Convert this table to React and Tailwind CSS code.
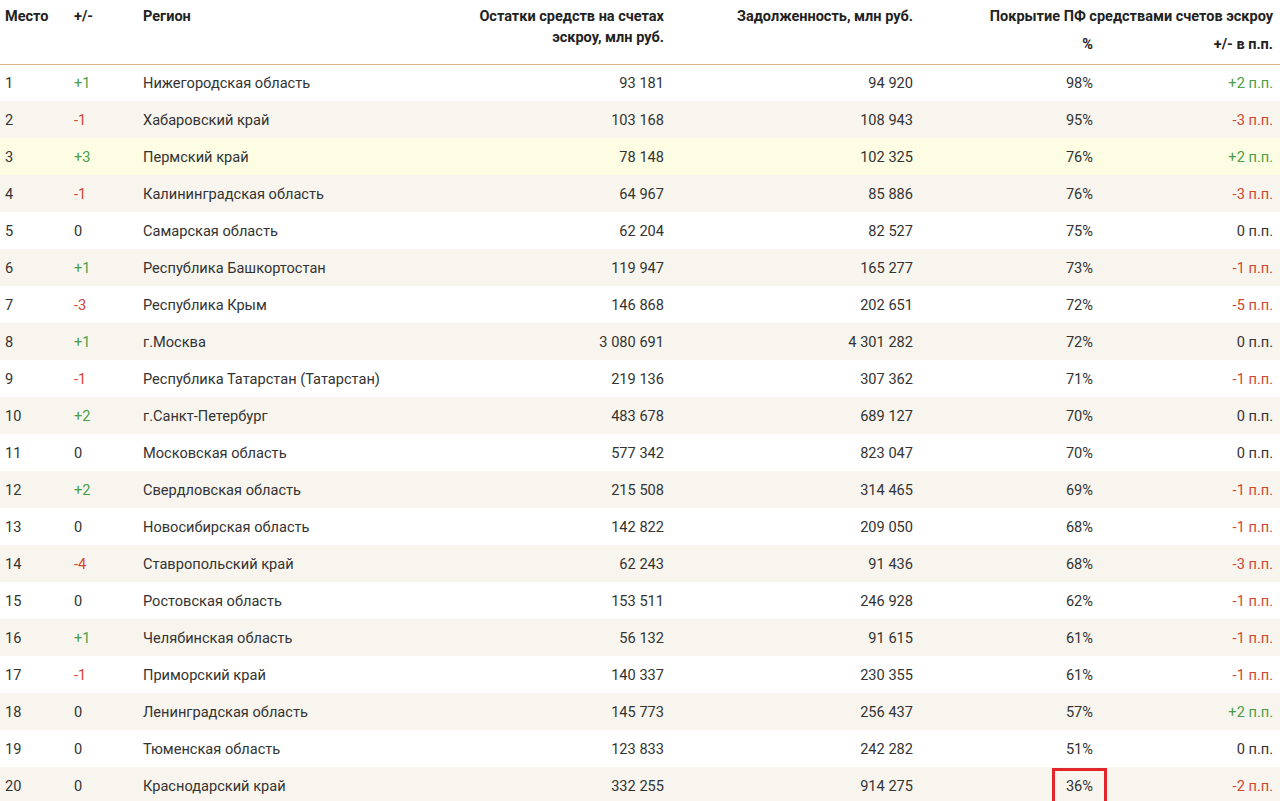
import React from 'react';

const rows = [
  ['1', '+1', 'Нижегородская область', '93 181', '94 920', '98%', '+2 п.п.'],
  ['2', '-1', 'Хабаровский край', '103 168', '108 943', '95%', '-3 п.п.'],
  ['3', '+3', 'Пермский край', '78 148', '102 325', '76%', '+2 п.п.'],
  ['4', '-1', 'Калининградская область', '64 967', '85 886', '76%', '-3 п.п.'],
  ['5', '0', 'Самарская область', '62 204', '82 527', '75%', '0 п.п.'],
  ['6', '+1', 'Республика Башкортостан', '119 947', '165 277', '73%', '-1 п.п.'],
  ['7', '-3', 'Республика Крым', '146 868', '202 651', '72%', '-5 п.п.'],
  ['8', '+1', 'г.Москва', '3 080 691', '4 301 282', '72%', '0 п.п.'],
  ['9', '-1', 'Республика Татарстан (Татарстан)', '219 136', '307 362', '71%', '-1 п.п.'],
  ['10', '+2', 'г.Санкт-Петербург', '483 678', '689 127', '70%', '0 п.п.'],
  ['11', '0', 'Московская область', '577 342', '823 047', '70%', '0 п.п.'],
  ['12', '+2', 'Свердловская область', '215 508', '314 465', '69%', '-1 п.п.'],
  ['13', '0', 'Новосибирская область', '142 822', '209 050', '68%', '-1 п.п.'],
  ['14', '-4', 'Ставропольский край', '62 243', '91 436', '68%', '-3 п.п.'],
  ['15', '0', 'Ростовская область', '153 511', '246 928', '62%', '-1 п.п.'],
  ['16', '+1', 'Челябинская область', '56 132', '91 615', '61%', '-1 п.п.'],
  ['17', '-1', 'Приморский край', '140 337', '230 355', '61%', '-1 п.п.'],
  ['18', '0', 'Ленинградская область', '145 773', '256 437', '57%', '+2 п.п.'],
  ['19', '0', 'Тюменская область', '123 833', '242 282', '51%', '0 п.п.'],
  ['20', '0', 'Краснодарский край', '332 255', '914 275', '36%', '-2 п.п.'],
];

// colour for +/- values
function tone(v) {
  if (v.startsWith('+')) return 'text-[#4a9e45]';
  if (v.startsWith('-')) return 'text-[#d2452f]';
  return 'text-[#333333]';
}

function rowBg(i) {
  if (i === 2) return 'bg-[#fdfde4]';
  return i % 2 === 1 ? 'bg-[#f8f5ef]' : 'bg-white';
}

export default function App() {
  return (
    <div className="h-[801px] w-[1280px] overflow-hidden bg-white font-['Roboto',sans-serif] text-[#333333]">
      <table className="w-full table-fixed border-collapse">
        <colgroup>
          <col className="w-[69px]" />
          <col className="w-[69px]" />
          <col className="w-[313px]" />
          <col className="w-[220px]" />
          <col className="w-[249px]" />
          <col className="w-[180px]" />
          <col className="w-[180px]" />
        </colgroup>
        <thead className="text-[14.5px] font-bold leading-[21px] text-[#222222]">
          <tr className="h-[29px]">
            <th rowSpan={2} className="pl-[5px] pt-[6px] text-left align-top">Место</th>
            <th rowSpan={2} className="pl-[5px] pt-[6px] text-left align-top">+/-</th>
            <th rowSpan={2} className="pl-[5px] pt-[6px] text-left align-top">Регион</th>
            <th rowSpan={2} className="px-[7px] pt-[6px] text-right align-top">
              Остатки средств на счетах эскроу, млн руб.
            </th>
            <th rowSpan={2} className="px-[7px] pt-[6px] text-right align-top">
              Задолженность, млн руб.
            </th>
            <th colSpan={2} className="px-[7px] pt-[6px] text-right align-top whitespace-nowrap">
              Покрытие ПФ средствами счетов эскроу
            </th>
          </tr>
          <tr className="h-[35px] border-b border-[#d9b48c]">
            <th className="px-[7px] pt-[5px] text-right align-top">%</th>
            <th className="px-[7px] pt-[5px] text-right align-top">+/- в п.п.</th>
          </tr>
        </thead>
        <tbody className="text-[14.6px] leading-[20px]">
          {rows.map((r, i) => (
            <tr key={r[0]} className={`h-[37px] ${rowBg(i)}`}>
              <td className="pl-[5px] align-middle">{r[0]}</td>
              <td className={`pl-[5px] align-middle ${tone(r[1])}`}>{r[1]}</td>
              <td className="pl-[5px] align-middle">{r[2]}</td>
              <td className="px-[7px] text-right align-middle">{r[3]}</td>
              <td className="px-[7px] text-right align-middle">{r[4]}</td>
              <td className="px-[7px] text-right align-middle">
                {i === 19 ? (
                  <span className="-mr-[14px] inline-block border-[3px] border-[#e3262b] px-[11px] py-[5px]">
                    {r[5]}
                  </span>
                ) : (
                  r[5]
                )}
              </td>
              <td className={`px-[7px] text-right align-middle ${tone(r[6])}`}>{r[6]}</td>
            </tr>
          ))}
        </tbody>
      </table>
    </div>
  );
}
